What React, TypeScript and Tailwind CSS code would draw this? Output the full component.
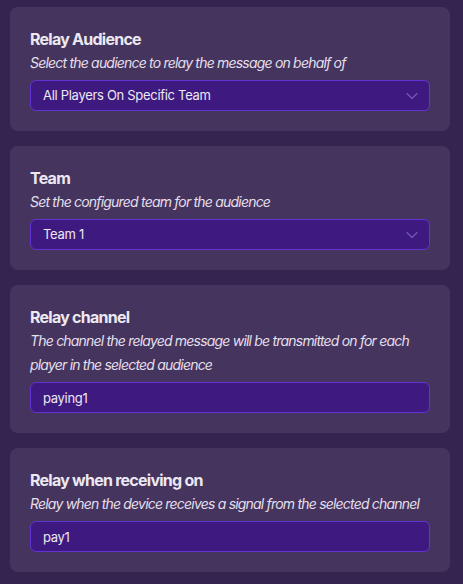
import { useState } from 'react';

type Field = {
  title: string;
  description: string;
  value: string;
  kind: 'select' | 'text';
};

const fields: Field[] = [
  {
    title: 'Relay Audience',
    description: 'Select the audience to relay the message on behalf of',
    value: 'All Players On Specific Team',
    kind: 'select',
  },
  {
    title: 'Team',
    description: 'Set the configured team for the audience',
    value: 'Team 1',
    kind: 'select',
  },
  {
    title: 'Relay channel',
    description: 'The channel the relayed message will be transmitted on for each player in the selected audience',
    value: 'paying1',
    kind: 'text',
  },
  {
    title: 'Relay when receiving on',
    description: 'Relay when the device receives a signal from the selected channel',
    value: 'pay1',
    kind: 'text',
  },
];

function Chevron() {
  return (
    <svg width="12" height="8" viewBox="0 0 12 8" fill="none" className="shrink-0">
      <path d="M1 1.5L6 6.5L11 1.5" stroke="#7457bd" strokeWidth="1.1" strokeLinecap="round" strokeLinejoin="round" />
    </svg>
  );
}

function FieldCard({ field }: { field: Field }) {
  const [value, setValue] = useState(field.value);

  return (
    <div className="rounded-lg bg-[#45355e] p-5">
      <div className="text-base leading-6 font-bold tracking-[-0.75px] text-[#ece8f1]">{field.title}</div>
      <div className="text-sm leading-6 italic tracking-[-0.8px] text-[#e4dfeb]">{field.description}</div>
      {field.kind === 'select' ? (
        <div className="mt-[5px] flex h-[31px] items-center justify-between rounded-md border border-[#6332d2] bg-[#3e1a80] pl-3 pr-[11px] text-[13px] tracking-[-0.3px] text-[#ece8f1]">
          <span>{value}</span>
          <Chevron />
        </div>
      ) : (
        <input
          value={value}
          onChange={(e) => setValue(e.target.value)}
          className="mt-[5px] block h-[31px] w-full rounded-md border border-[#6332d2] bg-[#3e1a80] px-3 text-[13px] tracking-[-0.3px] text-[#ece8f1] outline-none"
        />
      )}
    </div>
  );
}

export default function App() {
  return (
    <div
      className="min-h-[584px] bg-[#35244f] pt-[7px] pl-[10px] pb-[11px]"
      style={{ fontFamily: 'Inter, "Noto Sans", sans-serif' }}
    >
      <div className="flex w-[440px] flex-col gap-[15px]">
        {fields.map((f) => (
          <FieldCard key={f.title} field={f} />
        ))}
      </div>
    </div>
  );
}
